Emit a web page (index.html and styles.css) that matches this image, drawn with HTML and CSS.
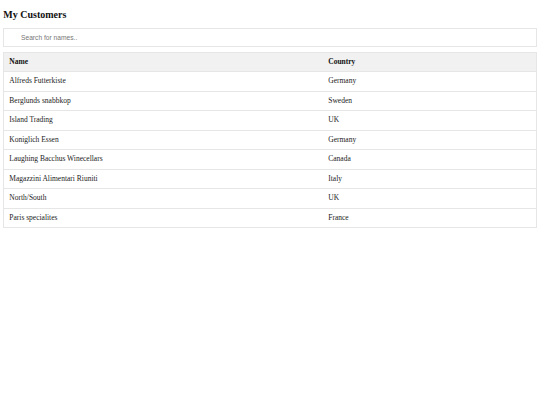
FILE: index.html
```html
<!DOCTYPE html>
<html>
<head>
<meta charset="utf-8">
<link rel="stylesheet" href="styles.css">
</head>
<body>
<h2 class="title">My Customers</h2>
<input type="text" class="search" placeholder="Search for names.." title="Type in a name">
<table class="customers">
  <tr class="header">
    <th class="col-name">Name</th>
    <th class="col-country">Country</th>
  </tr>
  <tr><td>Alfreds Futterkiste</td><td>Germany</td></tr>
  <tr><td>Berglunds snabbkop</td><td>Sweden</td></tr>
  <tr><td>Island Trading</td><td>UK</td></tr>
  <tr><td>Koniglich Essen</td><td>Germany</td></tr>
  <tr><td>Laughing Bacchus Winecellars</td><td>Canada</td></tr>
  <tr><td>Magazzini Alimentari Riuniti</td><td>Italy</td></tr>
  <tr><td>North/South</td><td>UK</td></tr>
  <tr><td>Paris specialites</td><td>France</td></tr>
</table>
</body>
</html>
```
FILE: styles.css
```css
* { box-sizing: border-box; }
html { background: #fff; }
body {
  margin: 3.33px;
  font-family: "Liberation Serif", "Times New Roman", serif;
  color: #222;
}
.title {
  font-size: 10px;
  font-weight: bold;
  margin: 5.3px 0 8.3px 0;
  line-height: 11.5px;
  color: #111;
}
.search {
  display: block;
  width: 100%;
  height: 18.5px;
  font-family: "Liberation Sans", Arial, sans-serif;
  font-size: 6.67px;
  padding: 0 8.3px 0 16.7px;
  border: 1px solid #e6e6e6;
  margin: 0 0 5px 0;
  outline: none;
}
.search::placeholder { color: #777; }
.customers {
  border-collapse: collapse;
  width: 100%;
  border: 1px solid #e6e6e6;
  font-size: 7.5px;
}
.customers th, .customers td {
  text-align: left;
  padding: 5px;
  line-height: 8.5px;
}
.customers th { color: #111; }
.customers tr { border-bottom: 1px solid #e6e6e6; }
.customers tr.header { background: #f1f1f1; }
.col-name { width: 60%; }
.col-country { width: 40%; }
```
